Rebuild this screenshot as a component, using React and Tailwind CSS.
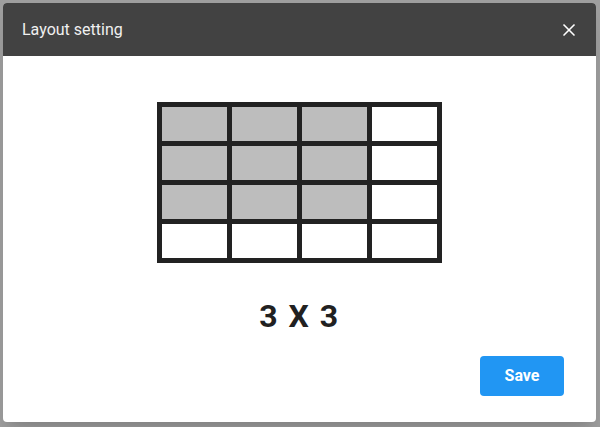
import { X } from "lucide-react";

const filled = [0, 1, 2, 4, 5, 6, 8, 9, 10];

function LayoutGrid() {
  return (
    <div className="mx-auto grid w-[285px] grid-cols-4 gap-[5px] bg-[#222222] p-[5px]">
      {Array.from({ length: 16 }).map((_, i) => (
        <div
          key={i}
          className={`h-[34px] ${filled.includes(i) ? "bg-[#bdbdbd]" : "bg-white"}`}
        />
      ))}
    </div>
  );
}

export default function App() {
  return (
    <div className="flex h-[427px] w-[600px] bg-[#9e9e9e] pt-[3px] pl-[3px] pr-[4px] pb-[5px] font-['Roboto',sans-serif]">
      <div className="flex flex-1 flex-col overflow-hidden rounded-[4px] bg-white shadow-xl">
        {/* Header */}
        <div className="flex h-[53px] shrink-0 items-center justify-between bg-[#424242] pl-[19px] pr-[17px]">
          <span className="text-[16px] text-[#f0f0f0]">Layout setting</span>
          <X className="h-[20px] w-[20px] text-white" strokeWidth={2} />
        </div>

        {/* Body */}
        <div className="flex flex-1 flex-col pt-[46px]">
          <LayoutGrid />
          <div className="mt-[37px] text-center text-[32px] leading-none font-bold tracking-[1.5px] text-[#212121]">
            3 X 3
          </div>
          <div className="mt-[24px] flex justify-end pr-[32px]">
            <button className="h-[40px] w-[84px] rounded-[4px] bg-[#2196f3] text-[16px] font-bold text-white">
              Save
            </button>
          </div>
        </div>
      </div>
    </div>
  );
}
